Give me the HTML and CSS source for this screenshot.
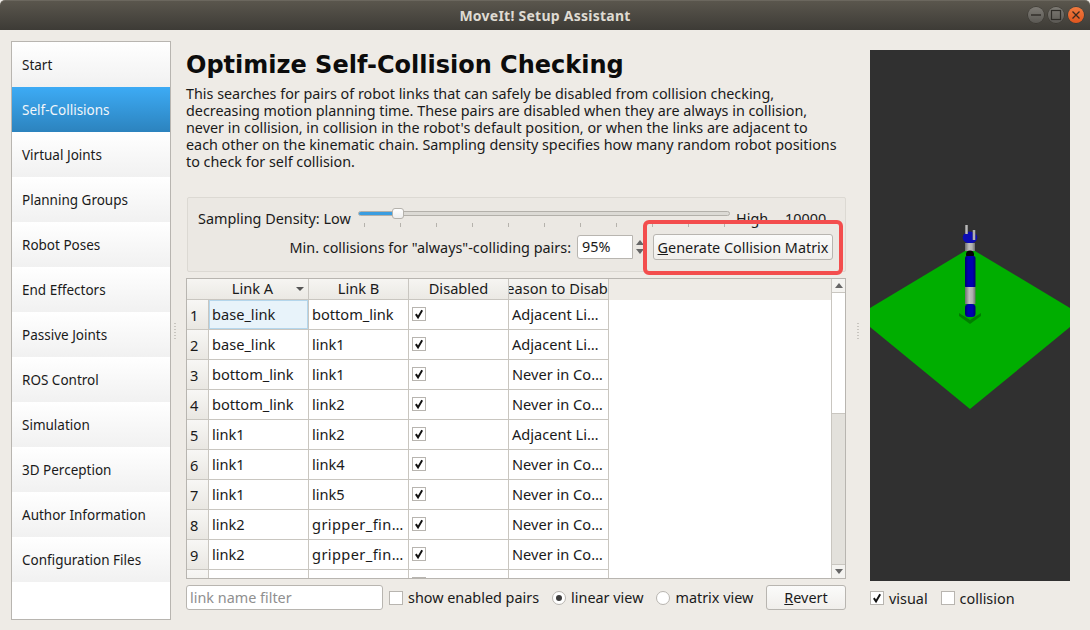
FILE: index.html
```html
<!DOCTYPE html>
<html lang="en">
<head>
<meta charset="utf-8">
<title>MoveIt! Setup Assistant</title>
<link rel="stylesheet" href="styles.css">
</head>
<body>
<div class="window">
  <header class="titlebar">
    <span class="title">MoveIt! Setup Assistant</span>
    <div class="winbtns">
      <span class="winbtn"><svg width="16" height="16" viewBox="0 0 16 16"><path d="M3 8h10" stroke="#2e2c28" stroke-width="1.4"/></svg></span>
      <span class="winbtn"><svg width="16" height="16" viewBox="0 0 16 16"><rect x="3.5" y="3.5" width="9" height="9" fill="none" stroke="#2e2c28" stroke-width="1.2"/></svg></span>
      <span class="winbtn close"><svg width="16" height="16" viewBox="0 0 16 16"><path d="M4.5 4.5l7 7M11.5 4.5l-7 7" stroke="#3a2a20" stroke-width="1.3"/></svg></span>
    </div>
  </header>
  <div class="content">
    <nav class="sidebar">
      <div class="navitem">Start</div>
      <div class="navitem active">Self-Collisions</div>
      <div class="navitem">Virtual Joints</div>
      <div class="navitem">Planning Groups</div>
      <div class="navitem">Robot Poses</div>
      <div class="navitem">End Effectors</div>
      <div class="navitem">Passive Joints</div>
      <div class="navitem">ROS Control</div>
      <div class="navitem">Simulation</div>
      <div class="navitem">3D Perception</div>
      <div class="navitem">Author Information</div>
      <div class="navitem">Configuration Files</div>
    </nav>
    <div class="splitter left"><i></i></div>
    <main class="main">
      <h1 class="heading">Optimize Self-Collision Checking</h1>
      <p class="desc">This searches for pairs of robot links that can safely be disabled from collision checking,<br>decreasing motion planning time. These pairs are disabled when they are always in collision,<br>never in collision, in collision in the robot's default position, or when the links are adjacent to<br>each other on the kinematic chain. Sampling density specifies how many random robot positions<br>to check for self collision.</p>
      <section class="group">
        <div class="density">
          <span class="lbl-density">Sampling Density: Low</span>
          <div class="slider">
            <div class="groove"><div class="groove-fill"></div><div class="handle"></div></div>
            <div class="ticks"><i></i><i></i><i></i><i></i><i></i><i></i><i></i><i></i><i></i><i></i><i></i></div>
          </div>
          <span class="lbl-high">High</span>
          <span class="lbl-val">10000</span>
        </div>
        <div class="minrow">
          <span class="lbl-min">Min. collisions for "always"-colliding pairs:</span>
          <div class="spin"><span class="spin-val">95%</span></div>
          <span class="spin-arrows"><b class="up"></b><b class="down"></b></span>
          <button class="btn gen"><u>G</u>enerate Collision Matrix</button>
        </div>
        <div class="highlight"></div>
      </section>
      <section class="tablewrap">
        <div class="tablepane">
          <div class="row head">
            <div class="corner"></div>
            <div class="hcell sorted">Link A<b class="sort"></b></div>
            <div class="hcell">Link B</div>
            <div class="hcell">Disabled</div>
            <div class="hcell clip"><span>Reason to Disable</span></div>
            <div class="hfill"></div>
          </div>
          <div class="row"><div class="rh">1</div><div class="cell focus">base_link</div><div class="cell">bottom_link</div><div class="cell"><span class="cb on"><svg viewBox="0 0 11 11"><path d="M2.6 5.6l2 3 3.8-6.6" fill="none" stroke="#111" stroke-width="1.8"/></svg></span></div><div class="cell">Adjacent Li…</div></div>
          <div class="row"><div class="rh">2</div><div class="cell">base_link</div><div class="cell">link1</div><div class="cell"><span class="cb on"><svg viewBox="0 0 11 11"><path d="M2.6 5.6l2 3 3.8-6.6" fill="none" stroke="#111" stroke-width="1.8"/></svg></span></div><div class="cell">Adjacent Li…</div></div>
          <div class="row"><div class="rh">3</div><div class="cell">bottom_link</div><div class="cell">link1</div><div class="cell"><span class="cb on"><svg viewBox="0 0 11 11"><path d="M2.6 5.6l2 3 3.8-6.6" fill="none" stroke="#111" stroke-width="1.8"/></svg></span></div><div class="cell">Never in Co…</div></div>
          <div class="row"><div class="rh">4</div><div class="cell">bottom_link</div><div class="cell">link2</div><div class="cell"><span class="cb on"><svg viewBox="0 0 11 11"><path d="M2.6 5.6l2 3 3.8-6.6" fill="none" stroke="#111" stroke-width="1.8"/></svg></span></div><div class="cell">Never in Co…</div></div>
          <div class="row"><div class="rh">5</div><div class="cell">link1</div><div class="cell">link2</div><div class="cell"><span class="cb on"><svg viewBox="0 0 11 11"><path d="M2.6 5.6l2 3 3.8-6.6" fill="none" stroke="#111" stroke-width="1.8"/></svg></span></div><div class="cell">Adjacent Li…</div></div>
          <div class="row"><div class="rh">6</div><div class="cell">link1</div><div class="cell">link4</div><div class="cell"><span class="cb on"><svg viewBox="0 0 11 11"><path d="M2.6 5.6l2 3 3.8-6.6" fill="none" stroke="#111" stroke-width="1.8"/></svg></span></div><div class="cell">Never in Co…</div></div>
          <div class="row"><div class="rh">7</div><div class="cell">link1</div><div class="cell">link5</div><div class="cell"><span class="cb on"><svg viewBox="0 0 11 11"><path d="M2.6 5.6l2 3 3.8-6.6" fill="none" stroke="#111" stroke-width="1.8"/></svg></span></div><div class="cell">Never in Co…</div></div>
          <div class="row"><div class="rh">8</div><div class="cell">link2</div><div class="cell wide">gripper_fin…</div><div class="cell"><span class="cb on"><svg viewBox="0 0 11 11"><path d="M2.6 5.6l2 3 3.8-6.6" fill="none" stroke="#111" stroke-width="1.8"/></svg></span></div><div class="cell">Never in Co…</div></div>
          <div class="row"><div class="rh">9</div><div class="cell">link2</div><div class="cell wide">gripper_fin…</div><div class="cell"><span class="cb on"><svg viewBox="0 0 11 11"><path d="M2.6 5.6l2 3 3.8-6.6" fill="none" stroke="#111" stroke-width="1.8"/></svg></span></div><div class="cell">Never in Co…</div></div>
          <div class="row"><div class="rh"></div><div class="cell"></div><div class="cell"></div><div class="cell"><span class="cb on"></span></div><div class="cell"></div></div>
        </div>
        <div class="scrollbar">
          <div class="sb-btn"><b class="up"></b></div>
          <div class="sb-thumb"></div>
          <div class="sb-track"></div>
          <div class="sb-btn bottom"><b class="down"></b></div>
        </div>
      </section>
      <div class="filters">
        <div class="lineedit">link name filter</div>
        <label class="check"><span class="cb"></span>show enabled pairs</label>
        <label class="radio r1"><span class="rb on"></span>linear view</label>
        <label class="radio r2"><span class="rb"></span>matrix view</label>
        <button class="btn revert"><u>R</u>evert</button>
      </div>
    </main>
    <div class="splitter"><i></i></div>
    <aside class="viewer">
      <div class="scene">
        <svg width="200" height="531" viewBox="870 50 200 531">
          <defs>
            <linearGradient id="blue" x1="0" x2="1" y1="0" y2="0"><stop offset="0" stop-color="#000070"/><stop offset=".3" stop-color="#0000b0"/><stop offset=".7" stop-color="#0000b0"/><stop offset="1" stop-color="#000070"/></linearGradient>
            <linearGradient id="grey" x1="0" x2="1" y1="0" y2="0"><stop offset="0" stop-color="#6e6e6e"/><stop offset=".4" stop-color="#bdbdbd"/><stop offset=".7" stop-color="#b0b0b0"/><stop offset="1" stop-color="#6e6e6e"/></linearGradient>
          </defs>
          <polygon points="870,327 970,409 1070,327 1070,308 970,248 870,308" fill="#00ae00"/>
          <polygon points="959,313 970,320 981,313 981,316 970,324 959,316" fill="#007f00"/>
          <ellipse cx="970" cy="237.5" rx="7.300" ry="6" fill="#0c0cb4"/>
          <rect x="965" y="225" width="3" height="9" fill="url(#grey)"/>
          <rect x="972.5" y="230" width="3" height="10" fill="url(#grey)"/>
          <rect x="965" y="243" width="10" height="8" fill="url(#grey)"/>
          <ellipse cx="970" cy="254.5" rx="4" ry="4" fill="#050505"/>
          <rect x="965" y="256" width="10.500" height="32" rx="2" fill="url(#blue)"/>
          <rect x="965" y="287" width="10.500" height="17" fill="url(#grey)"/>
          <rect x="965" y="304" width="10.500" height="13" rx="3.500" fill="url(#blue)"/>
        </svg>
      </div>
      <div class="viewopts">
        <label class="check"><span class="cb on"><svg viewBox="0 0 11 11"><path d="M2.6 5.6l2 3 3.8-6.6" fill="none" stroke="#111" stroke-width="1.8"/></svg></span>visual</label>
        <label class="check"><span class="cb"></span>collision</label>
      </div>
    </aside>
  </div>
</div>
</body>
</html>
```
FILE: styles.css
```css
* { box-sizing: border-box; }
html, body { margin: 0; padding: 0; }
body {
  font-family: "Noto Sans", "Open Sans", sans-serif;
  font-size: 14.4px;
  color: #1a1a1a;
  background: #2c2a26;
}
.window {
  width: 1090px;
  height: 630px;
  display: flex;
  flex-direction: column;
  background: #eeebe6;
  overflow: hidden;
}
.titlebar {
  height: 30px;
  flex: none;
  position: relative;
  display: flex;
  align-items: center;
  justify-content: center;
  padding-bottom: 1px;
  background: linear-gradient(#5a564d, #3d3b36);
  border-top: 1px solid #6b675e;
  border-radius: 5px 5px 0 0;
}
.title { color: #dfdbd2; font-weight: 700; font-size: 14px; letter-spacing: .25px; }
.winbtns { position: absolute; right: 6px; top: 6px; display: flex; gap: 4px; }
.winbtn {
  width: 16px; height: 16px; border-radius: 50%;
  display: flex; align-items: center; justify-content: center;
  background: linear-gradient(#7d7a74, #5b5954);
  box-shadow: 0 0 0 .5px #35332e;
}
.winbtn.close { background: linear-gradient(#f07a3f, #e0561f); }
.content { flex: 1; display: flex; padding: 11px 20px 10px 11px; min-height: 0; }
.sidebar {
  width: 160px; flex: none; height: 579px;
  background: #fff;
  border: 1px solid #b8b5b0;
}
.navitem {
  height: 45px;
  padding-left: 10px;
  display: flex; align-items: center;
  background: linear-gradient(#ffffff, #f1f1f1);
  font-size: 13.5px;
  color: #1a1a1a;
}
.navitem.active { background: linear-gradient(#3dabf5, #2c83be); color: #f2f6fa; }
.main { width: 660px; flex: none; display: flex; flex-direction: column; }
.heading {
  font-family: "DejaVu Sans", sans-serif;
  font-size: 24px; font-weight: 700; line-height: 28px;
  margin: 10px 0 0 0; color: #0c0c0c;
}
.desc { margin: 6px 0 0 0; font-size: 14.35px; line-height: 17px; color: #1a1a1a; white-space: nowrap; }
.group {
  position: relative;
  margin: 27px 0 0 1px;
  height: 75px;
  border: 1px solid #dcd9d3;
  border-radius: 2px;
  background: #ebe8e3;
  padding: 0 0 0 10px;
}
.density { display: flex; height: 34px; align-items: flex-start; }
.lbl-density { margin-top: 11px; line-height: 19px; width: 160px; white-space: nowrap; }
.slider { width: 372px; margin-top: 13px; position: relative; }
.groove { height: 5px; border: 1px solid #b3b0aa; border-radius: 3px; background: #dcdad5; position: relative; }
.groove-fill { width: 34px; height: 100%; background: #3a9de0; border-radius: 3px 0 0 3px; }
.handle {
  position: absolute; left: 33px; top: -4px;
  width: 12px; height: 11px;
  background: linear-gradient(#fff, #eee);
  border: 1px solid #b5b2ac; border-radius: 3px;
}
.ticks { display: flex; justify-content: space-between; margin: 7px 0 0 6px; width: 361px; }
.ticks i { width: 1px; height: 4px; background: #b5b2ac; }
.lbl-high { margin: 11px 0 0 6px; line-height: 19px; width: 49px; }
.lbl-val { margin-top: 11px; line-height: 19px; }
.minrow { display: flex; align-items: center; justify-content: flex-end; height: 26px; margin-top: 2px; padding-right: 12px; }
.lbl-min { white-space: nowrap; margin-right: 6px; }
.spin {
  width: 56px; height: 24px;
  background: #fff; border: 1px solid #b8b5b0; border-radius: 3px 0 0 3px;
}
.spin-val { padding-left: 4px; line-height: 21px; display: block; }
.spin-arrows {
  width: 14px; height: 24px; margin-right: 6px;
  display: flex; flex-direction: column; align-items: center; justify-content: center; gap: 4px;
}
.up, .down { display: block; width: 0; height: 0; border-left: 4px solid transparent; border-right: 4px solid transparent; }
.up { border-bottom: 5px solid #666; }
.down { border-top: 5px solid #666; }
.btn {
  font-family: inherit; font-size: 14.4px; color: #1a1a1a;
  height: 26px; padding: 0;
  background: linear-gradient(#fbfbfa, #f0eeeb);
  border: 1px solid #b8b5b0; border-radius: 3px;
}
.gen { width: 180px; }
.highlight {
  position: absolute; left: 455px; top: 22px;
  width: 200px; height: 55px;
  border: 4px solid #f34d4d; border-radius: 6px;
}
.tablewrap {
  margin-top: 6px; height: 301px;
  display: flex; border: 1px solid #b8b5b0; background: #fff;
}
.tablepane { flex: 1; overflow: hidden; min-width: 0; }
.row { display: flex; height: 30px; font-size: 14.6px; }
.row.head { height: 21px; background: #eeebe6; }
.corner { width: 22px; flex: none; background: linear-gradient(#f6f5f2, #ebe9e4); border-bottom: 1px solid #c9c6c0; }
.hcell {
  width: 100px; flex: none; position: relative;
  display: flex; align-items: center; justify-content: center;
  padding-bottom: 2px;
  background: linear-gradient(#f6f5f2, #ebe9e4);
  border-right: 1px solid #c9c6c0; border-bottom: 1px solid #c9c6c0;
  white-space: nowrap; overflow: hidden;
}
.hcell.sorted { padding-right: 12px; }
.hcell.clip span { flex: none; }
.hfill { flex: 1; }
.sort {
  position: absolute; right: 4px; top: 8px;
  width: 0; height: 0; border-left: 4px solid transparent; border-right: 4px solid transparent; border-top: 4px solid #555;
}
.rh {
  width: 22px; flex: none; padding: 1px 0 0 3px;
  display: flex; align-items: center;
  background: linear-gradient(#f8f7f5, #e9e7e2);
  border-right: 1px solid #c9c6c0; border-bottom: 1px solid #c9c6c0;
}
.cell {
  width: 100px; flex: none; padding: 0 0 2px 3px;
  display: flex; align-items: center;
  white-space: nowrap; overflow: hidden;
  border-right: 1px solid #c9c6c0; border-bottom: 1px solid #c9c6c0;
  background: #fff;
}
.cell.wide { letter-spacing: .4px; }
.cell.focus { background: #e8f3fa; box-shadow: inset 0 0 0 1px #b4d6ec; }
.cb {
  width: 14px; height: 14px; flex: none; display: inline-block;
  background: #fff; border: 1px solid #b8b5b0;
}
.cb svg { display: block; width: 12px; height: 12px; }
.scrollbar { width: 14px; flex: none; display: flex; flex-direction: column; border-left: 1px solid #c9c6c0; background: #e3e1dc; }
.sb-btn { height: 14px; background: #f4f3f0; border-bottom: 1px solid #c9c6c0; display: flex; align-items: center; justify-content: center; flex: none; }
.sb-btn.bottom { border-bottom: 0; border-top: 1px solid #c9c6c0; }
.sb-thumb { height: 121px; background: #fff; border-bottom: 1px solid #c9c6c0; flex: none; }
.sb-track { flex: 1; background: #e3e1dc; }
.filters { display: flex; align-items: center; height: 25px; margin-top: 6px; }
.lineedit {
  width: 197px; height: 25px; padding-left: 3px; line-height: 23px;
  background: #fff; border: 1px solid #b8b5b0; border-radius: 3px; color: #8f8f8f;
}
.check, .radio { display: inline-flex; align-items: center; gap: 5px; white-space: nowrap; }
.filters .check { margin-left: 6px; }
.r1 { margin-left: 13px; }
.r2 { margin-left: 13px; }
.rb {
  width: 14px; height: 14px; border-radius: 50%; flex: none;
  background: #fff; border: 1px solid #b8b5b0; display: flex; align-items: center; justify-content: center;
}
.rb.on::after { content: ""; width: 6px; height: 6px; border-radius: 50%; background: #3c3c3c; }
.revert { width: 80px; height: 25px; margin-left: auto; }
.splitter { width: 24px; flex: none; display: flex; align-items: center; justify-content: center; height: 579px; }
.splitter.left { width: 15px; justify-content: flex-start; padding-left: 3px; }
.splitter i { width: 2px; height: 18px; background-image: linear-gradient(#c8c5bf 1px, transparent 1px); background-size: 2px 3px; margin-top: 2px; }
.viewer { width: 200px; flex: none; display: flex; flex-direction: column; margin-top: 9px; }
.scene { height: 531px; background: #303030; flex: none; }
.scene svg { display: block; }
.viewopts { display: flex; gap: 13px; margin-top: 7px; height: 20px; align-items: center; }
```
